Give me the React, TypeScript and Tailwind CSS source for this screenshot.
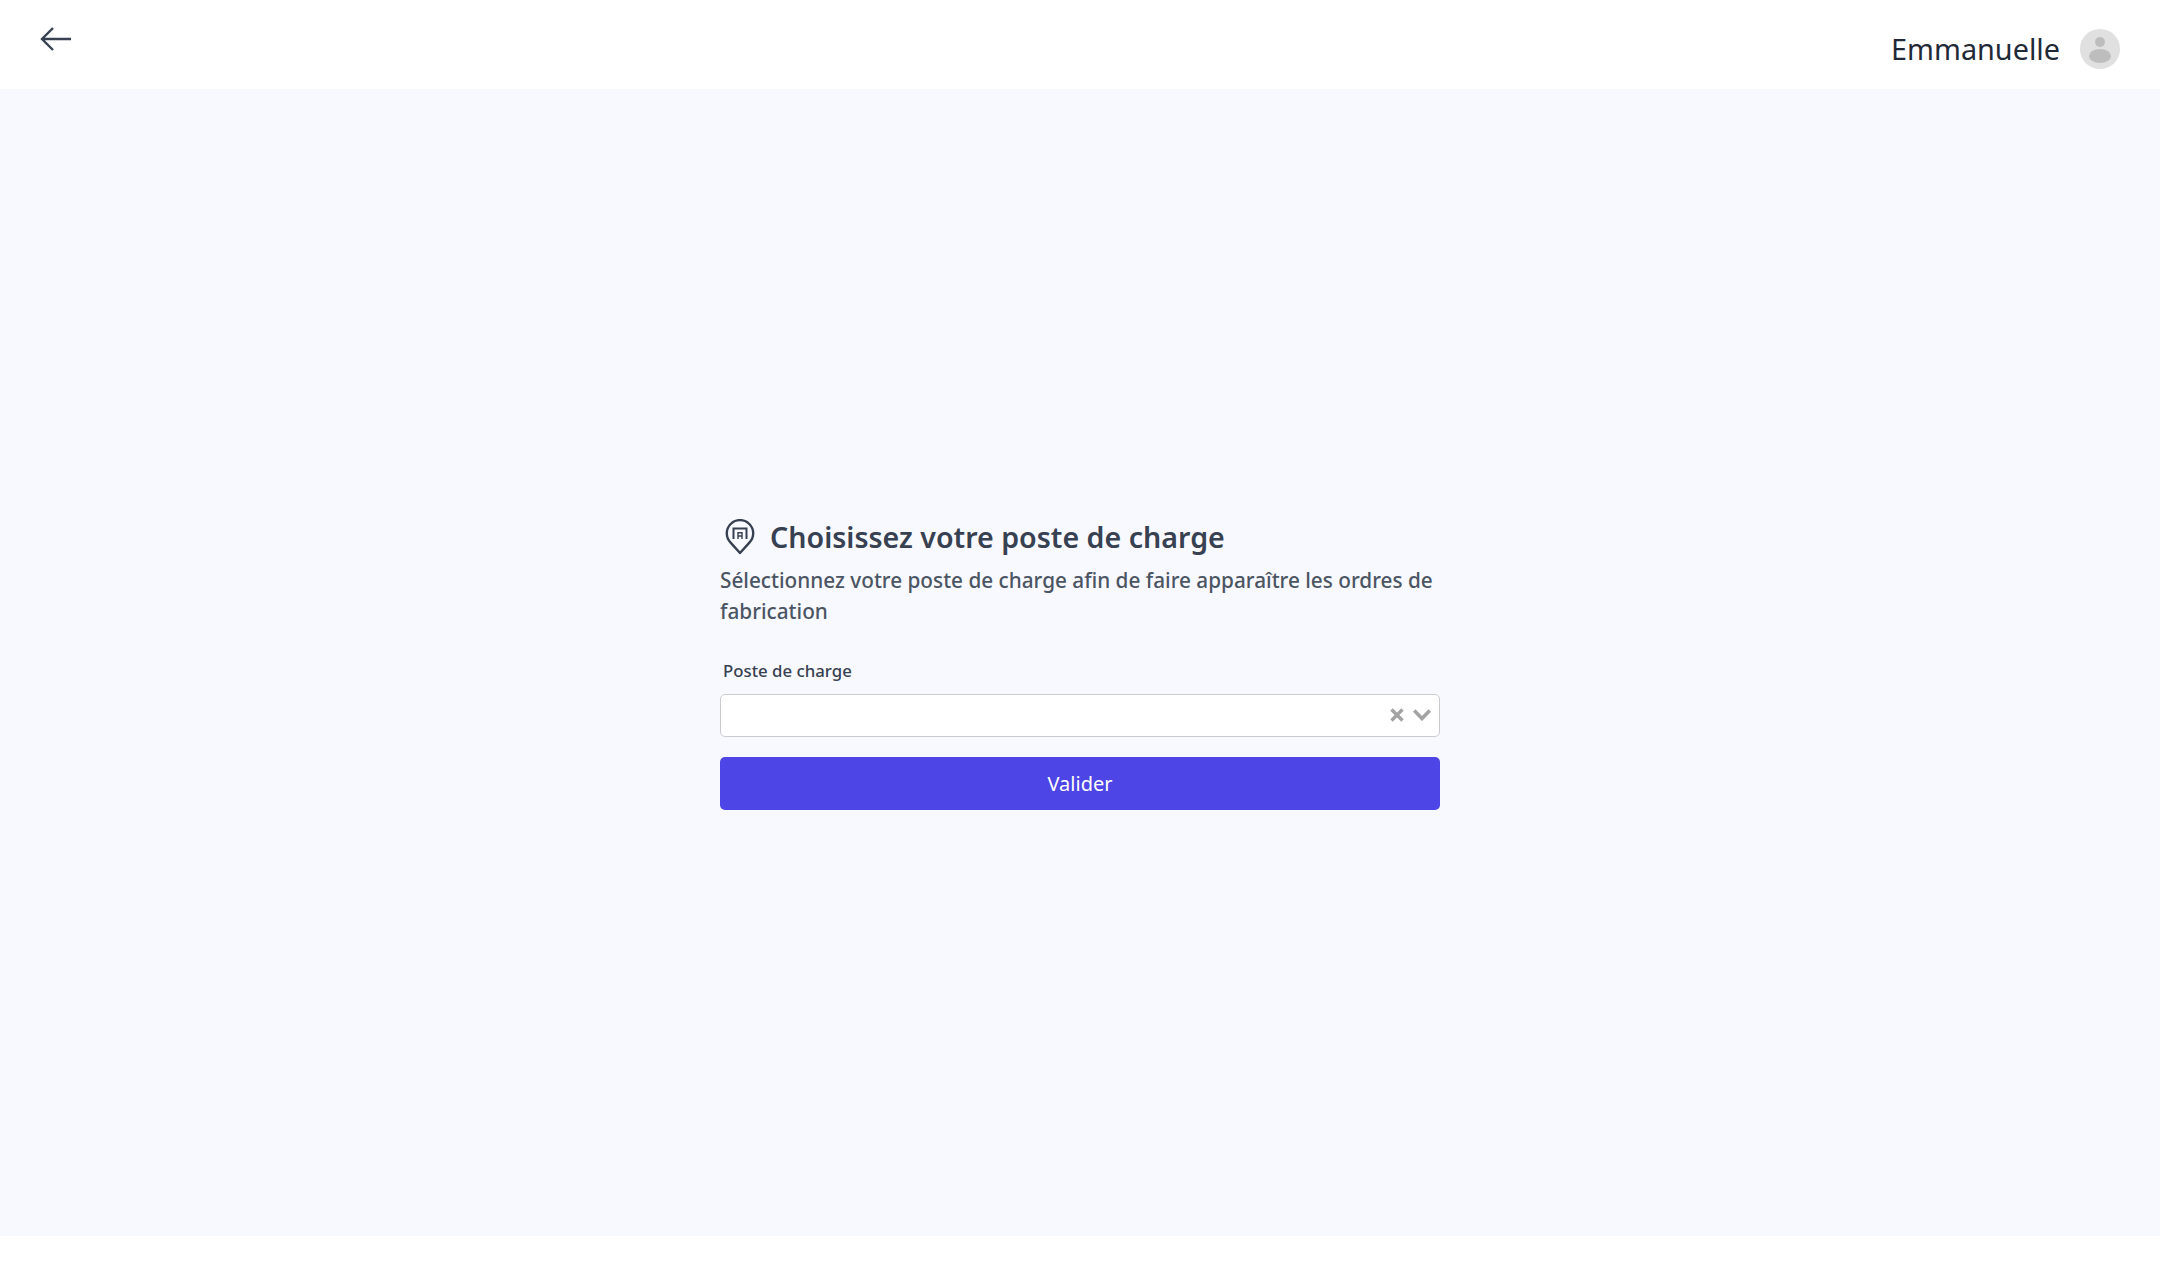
function PinIcon() {
  return (
    <svg width="30" height="36" viewBox="0 0 30 36" fill="none" className="text-[#374151]">
      <path
        d="M15 34 L5.6 23.6 A13.2 13.2 0 1 1 24.4 23.6 Z"
        stroke="currentColor"
        strokeWidth="2.4"
        strokeLinejoin="round"
      />
      <path d="M8.5 20 V9.5 H21.5 V20" stroke="currentColor" strokeWidth="2" />
      <path d="M13 20 V13.8 H17 V20 M13 17 H17" stroke="currentColor" strokeWidth="1.4" />
    </svg>
  );
}

function UserAvatar() {
  return (
    <div className="w-10 h-10 rounded-full bg-[#e0e0e0] flex items-center justify-center">
      <svg width="40" height="40" viewBox="0 0 40 40" fill="#bdbdbd">
        <circle cx="20" cy="13" r="5" />
        <ellipse cx="20" cy="27" rx="11" ry="7" />
      </svg>
    </div>
  );
}

export default function App() {
  return (
    <div className="min-h-[1275px] flex flex-col bg-white font-['Noto_Sans',sans-serif]">
      <header className="h-[89px] bg-white flex justify-between pl-10 pr-10">
        <button className="h-[78px] flex items-center text-[#374151]">
          <svg width="32" height="24" viewBox="0 0 32 24" fill="none" stroke="currentColor" strokeWidth="2.4">
            <path d="M31 12 H2 M13 1 L2 12 L13 23" />
          </svg>
        </button>
        <div className="flex items-center gap-5 pt-2">
          <span className="text-[28.8px] text-[#1f2937]">Emmanuelle</span>
          <UserAvatar />
        </div>
      </header>

      <main className="h-[1147px] bg-[#f8f9fe] flex items-center justify-center">
        <div className="w-[720px] flex flex-col pt-[3px]">
          <div className="flex items-center gap-[15px] pl-[5px] h-[36px]">
            <PinIcon />
            <h1 className="text-[28.6px] leading-9 font-semibold text-[#374151]">
              Choisissez votre poste de charge
            </h1>
          </div>
          <p className="mt-[10px] text-[20.75px] leading-[31px] font-medium text-[#4b5563]">
            Sélectionnez votre poste de charge afin de faire apparaître les ordres de fabrication
          </p>
          <label className="mt-[32px] pl-[3px] text-[16.8px] leading-6 font-medium text-[#374151]">
            Poste de charge
          </label>
          <div className="mt-[11px] h-[43px] bg-white border border-[#cbcbd0] rounded-[5px] flex items-center justify-end gap-[9px] pr-[8px]">
            <svg width="14" height="14" viewBox="0 0 14 14" fill="none" stroke="#a3a3a3" strokeWidth="3.4">
              <path d="M1.5 1.5 L12.5 12.5 M12.5 1.5 L1.5 12.5" />
            </svg>
            <svg width="18" height="12" viewBox="0 0 18 12" fill="none" stroke="#a3a3a3" strokeWidth="3.6">
              <path d="M1.2 1.5 L9 9.5 L16.8 1.5" />
            </svg>
          </div>
          <button className="mt-5 h-[53px] pt-[2px] rounded-[5px] bg-[#4d45e5] text-white text-[20px]">
            Valider
          </button>
        </div>
      </main>
    </div>
  );
}
